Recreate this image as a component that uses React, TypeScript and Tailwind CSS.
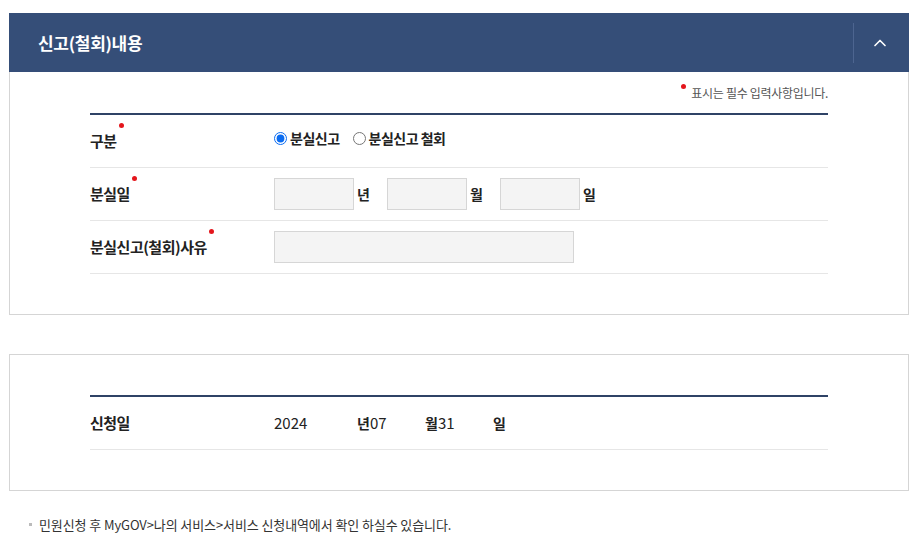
import { ChevronUp } from "lucide-react";

const font = { fontFamily: '"Noto Sans CJK KR", "Noto Sans", sans-serif' };

function Req() {
  return <span className="ml-[2px] inline-block h-[5px] w-[5px] -translate-y-[7px] rounded-full bg-[#e4161c] align-top" />;
}

function Row({ label, required, children }: { label: string; required?: boolean; children: React.ReactNode }) {
  return (
    <div className="flex h-[53px] items-center border-b border-[#e6e6e6]">
      <div className="w-[184px] pt-[1px] text-[15px] font-bold tracking-[-0.5px] text-[#222]">
        {label}
        {required && <Req />}
      </div>
      <div className="flex flex-1 items-center">{children}</div>
    </div>
  );
}

function DateBox({ unit }: { unit: string }) {
  return (
    <div className="mr-[16px] flex items-center">
      <input className="h-[32px] w-[80px] border border-[#d6d6d6] bg-[#f4f4f4] outline-none" />
      <span className="ml-[3px] w-[14px] text-[14px] font-bold text-[#222]">{unit}</span>
    </div>
  );
}

export default function App() {
  return (
    <div className="min-h-[538px] bg-white pt-[13px]" style={font}>
      <div className="ml-[9px] w-[900px]">
        <div className="flex h-[59px] items-center justify-between bg-[#354e78] pl-[29px]">
          <h2 className="text-[17px] font-bold tracking-[-0.3px] text-white">신고(철회)내용</h2>
          <div className="flex h-[40px] w-[56px] items-center justify-center border-l border-[#4d6590]">
            <ChevronUp size={20} strokeWidth={2} className="mr-[4px] text-white" />
          </div>
        </div>

        <div className="border border-t-0 border-[#d5d5d5] px-[80px] pb-[40px]">
          <p className="flex h-[41px] items-center justify-end text-[12px] tracking-[-0.3px] text-[#555]">
            <span className="mr-[5px] inline-block h-[5px] w-[5px] -translate-y-[6px] rounded-full bg-[#e4161c]" />
            표시는 필수 입력사항입니다.
          </p>
          <div className="border-t-2 border-[#2f4366]">
            <Row label="구분" required>
              <div className="flex -translate-y-[3px] items-center">
                <label className="flex items-center text-[14px] font-bold tracking-[-0.5px] text-[#222]">
                  <input type="radio" name="gb" defaultChecked className="m-0 mr-[3px] h-[13px] w-[13px] accent-[#0b6cf1]" />
                  분실신고
                </label>
                <label className="ml-[13px] flex items-center text-[14px] font-bold tracking-[-0.5px] text-[#222]">
                  <input type="radio" name="gb" className="m-0 mr-[3px] h-[13px] w-[13px]" />
                  분실신고 철회
                </label>
              </div>
            </Row>
            <Row label="분실일" required>
              <DateBox unit="년" />
              <DateBox unit="월" />
              <DateBox unit="일" />
            </Row>
            <Row label="분실신고(철회)사유" required>
              <input className="h-[32px] w-[300px] border border-[#d6d6d6] bg-[#f4f4f4] outline-none" />
            </Row>
          </div>
        </div>

        <div className="mt-[39px] border border-[#d5d5d5] px-[80px] pb-[40px] pt-[40px]">
          <div className="border-t-2 border-[#2f4366]">
            <Row label="신청일">
              <div className="flex items-center text-[15px] text-[#222]">
                <span className="w-[83px]">2024</span>
                <span className="w-[68px]">
                  <b className="text-[14px]">년</b>07
                </span>
                <span className="w-[68px]">
                  <b className="text-[14px]">월</b>31
                </span>
                <b className="text-[14px]">일</b>
              </div>
            </Row>
          </div>
        </div>

        <p className="mt-[24px] flex items-center text-[13px] tracking-[-0.1px] text-[#333]">
          <span className="ml-[20px] mr-[7px] inline-block h-[3px] w-[3px] bg-[#bbb]" />
          민원신청 후 MyGOV&gt;나의 서비스&gt;서비스 신청내역에서 확인 하실수 있습니다.
        </p>
      </div>
    </div>
  );
}
